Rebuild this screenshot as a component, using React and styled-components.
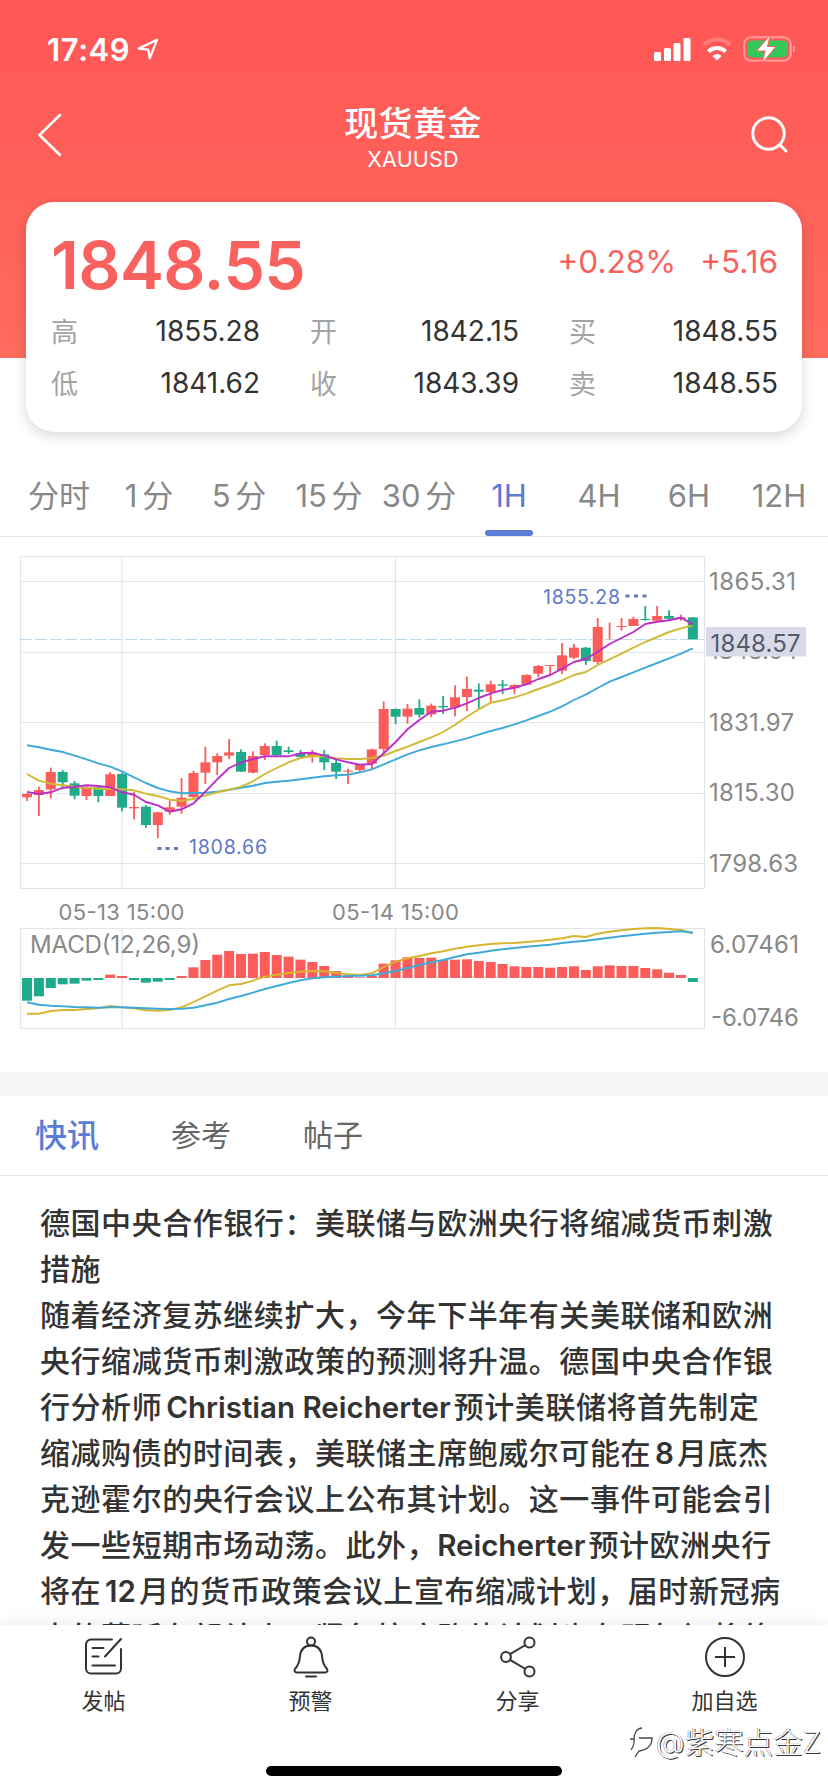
import React, { useState } from "react";
import styled, { createGlobalStyle } from "styled-components";

const quotes = [
  { label: "高", value: "1855.28" },
  { label: "开", value: "1842.15" },
  { label: "买", value: "1848.55" },
  { label: "低", value: "1841.62" },
  { label: "收", value: "1843.39" },
  { label: "卖", value: "1848.55" },
];

const periods = ["分时", "1 分", "5 分", "15 分", "30 分", "1H", "4H", "6H", "12H"];

// [wick top, body top, body bottom, wick bottom, rising]
const candles = [
  [760, 762, 772, 783, 1], [740, 750, 765, 828, 1], [683, 696, 748, 776, 1],
  [690, 696, 727, 748, 0], [723, 730, 767, 778, 0], [735, 742, 768, 780, 1],
  [735, 742, 768, 787, 0], [696, 703, 768, 768, 1], [698, 702, 803, 814, 0],
  [755, 801, 805, 838, 1], [795, 800, 855, 864, 0], [815, 817, 855, 895, 1],
  [782, 802, 815, 824, 1], [714, 773, 800, 821, 1], [692, 699, 771, 775, 1],
  [620, 667, 698, 732, 1], [640, 648, 667, 705, 1], [597, 637, 647, 657, 1],
  [628, 636, 695, 696, 0], [634, 648, 698, 700, 1], [610, 618, 645, 660, 1],
  [602, 618, 645, 648, 0], [620, 631, 636, 642, 0], [630, 640, 651, 655, 0],
  [630, 638, 651, 668, 1], [630, 643, 667, 690, 0], [660, 669, 695, 717, 0],
  [686, 692, 695, 732, 1], [672, 674, 690, 698, 1], [626, 628, 671, 688, 1],
  [484, 507, 627, 650, 1], [505, 507, 530, 553, 0], [492, 506, 530, 551, 1],
  [478, 504, 524, 533, 0], [491, 497, 523, 532, 1], [468, 498, 502, 522, 0],
  [436, 472, 503, 529, 1], [410, 447, 471, 513, 1], [430, 449, 455, 508, 0],
  [422, 433, 456, 488, 1], [420, 433, 437, 462, 0], [433, 435, 445, 462, 1],
  [403, 405, 434, 434, 1], [375, 378, 401, 411, 1], [375, 375, 378, 405, 1],
  [309, 346, 392, 402, 1], [312, 323, 353, 357, 1], [321, 323, 363, 375, 0],
  [234, 261, 366, 372, 1], [248, 274, 274, 298, 1], [234, 258, 261, 272, 1],
  [230, 237, 258, 258, 1], [198, 237, 240, 242, 0], [198, 228, 242, 244, 1],
  [211, 228, 236, 242, 0], [224, 232, 236, 242, 1], [232, 232, 298, 298, 0],
];

const ma5 = [
  756, 762, 757, 743, 741, 736, 738, 742, 757, 764, 786, 796, 815, 808, 790,
  755, 718, 684, 668, 657, 649, 649, 649, 640, 638, 647, 658, 667, 674, 672,
  640, 606, 568, 540, 515, 512, 503, 490, 474, 460, 450, 443, 433, 417, 405,
  386, 366, 357, 335, 312, 294, 276, 252, 245, 241, 233, 253,
];
const ma10 = [
  702, 722, 731, 736, 740, 744, 746, 747, 748, 751, 761, 768, 779, 782, 777,
  767, 757, 749, 740, 724, 702, 684, 667, 654, 648, 649, 655, 657, 657, 654,
  647, 633, 620, 606, 592, 576, 554, 530, 508, 488, 481, 472, 461, 447, 435,
  421, 405, 396, 375, 358, 341, 323, 306, 291, 276, 265, 256,
];
const ma20 = [
  616, 622, 629, 636, 647, 658, 670, 680, 694, 712, 729, 744, 754, 760, 759,
  758, 755, 749, 743, 737, 729, 725, 722, 718, 713, 709, 706, 704, 697, 688,
  673, 658, 643, 631, 621, 613, 604, 595, 584, 573, 564, 553, 541, 528, 515,
  499, 480, 464, 444, 425, 411, 397, 383, 369, 355, 341, 325,
];
const macd = [
  332, 319, 294, 283, 281, 272, 270, 254, 258, 270, 278, 275, 270, 258, 232,
  210, 194, 183, 192, 191, 186, 195, 200, 209, 216, 228, 243, 257, 262, 258,
  221, 211, 202, 204, 203, 210, 209, 208, 213, 216, 222, 229, 231, 231, 233,
  231, 229, 240, 229, 226, 228, 228, 234, 238, 248, 255, 276,
];
const dif = [
  371, 371, 363, 360, 360, 357, 355, 348, 352, 355, 361, 362, 360, 352, 336,
  319, 302, 286, 282, 272, 260, 254, 249, 245, 243, 244, 248, 253, 255, 250,
  231, 215, 205, 198, 190, 184, 176, 170, 166, 162, 160, 159, 156, 153, 149,
  145, 138, 141, 131, 125, 121, 117, 115, 114, 117, 120, 129,
];
const dea = [
  337, 344, 347, 349, 351, 352, 353, 352, 352, 353, 355, 356, 357, 356, 353,
  346, 338, 327, 318, 308, 297, 288, 279, 271, 265, 262, 260, 258, 257, 256,
  250, 243, 234, 225, 217, 210, 201, 193, 188, 182, 178, 174, 170, 167, 164,
  159, 155, 152, 148, 143, 139, 135, 131, 128, 126, 124, 128,
];

const px = (i) => 27 + i * 11.89;
const priceY = (v) => 3 + v / 3;
const macdY = (v) => 353 + v / 3;
const toPoints = (list, y) =>
  list.map((v, i) => `${px(i).toFixed(1)},${y(v).toFixed(1)}`).join(" ");

const RED = "#fc5c5a";
const GREEN = "#1fab89";

function StatusBar() {
  return (
    <StyledStatus>
      <Clock>17:49</Clock>
      <svg width="22" height="22" viewBox="0 0 22 22">
        <path
          d="M1.8 10.6L20 1.8l-7.2 18.4-1.6-8.6z"
          fill="none"
          stroke="#fff"
          strokeWidth="2.3"
          strokeLinejoin="round"
        />
      </svg>
      <Spacer />
      <svg width="144" height="30" viewBox="0 0 144 30">
        <g fill="#fff">
          <rect x="2" y="18" width="7" height="9" rx="1.5" />
          <rect x="12" y="14" width="7" height="13" rx="1.5" />
          <rect x="21.5" y="9" width="7" height="18" rx="1.5" />
          <rect x="31.5" y="4" width="7" height="23" rx="1.5" />
          <path d="M65 26.5l-4.6-4.6a6.5 6.5 0 0 1 9.2 0z" />
        </g>
        <g fill="none" stroke="#fff" strokeWidth="4">
          <path d="M56.4 17.6a12.2 12.2 0 0 1 17.2 0" />
          <path d="M52 10.8a18.6 18.6 0 0 1 26 0" opacity="0.22" />
        </g>
        <rect x="92.2" y="3.2" width="46.5" height="23.6" rx="7" fill="none" stroke="#fff" strokeOpacity="0.4" strokeWidth="2" />
        <rect x="95.5" y="6.5" width="40" height="17" rx="4.2" fill="#34c759" />
        <path d="M141 11.5c2.4.6 2.4 6.4 0 7z" fill="#fff" opacity="0.5" />
        <path d="M118.5.5l-14 16.5h8.5l-3 12.500 14-17h-8.500z" fill="#fff" stroke="#fc5a58" strokeWidth="1" />
      </svg>
    </StyledStatus>
  );
}

function PriceChart() {
  return (
    <svg width="828" height="535" viewBox="0 0 828 535">
      {/* grid */}
      <g fill="none" stroke="#e4e5e8" strokeWidth="1.2">
        <rect x="20.5" y="19.5" width="684" height="332" />
        <rect x="20.5" y="391.5" width="684" height="100" />
        {[44.5, 115.5, 185.5, 256.5, 326.5].map((y) => (
          <line key={y} x1="20.5" x2="704.5" y1={y} y2={y} />
        ))}
        {[122, 395.5].map((x) => (
          <path key={x} d={`M${x} 19.5V351.5M${x} 391.5V491.5`} />
        ))}
      </g>
      <line x1="20" x2="704" y1="102.5" y2="102.5" stroke="#bfd9ea" strokeDasharray="12 3" />

      {candles.map(([high, top, bottom, low, up], i) => (
        <g key={i} fill={up ? RED : GREEN}>
          <rect x={px(i) - 0.9} y={priceY(high)} width="1.8" height={(low - high) / 3} />
          <rect x={px(i) - 5} y={priceY(top)} width="10" height={(bottom - top) / 3} />
        </g>
      ))}
      <g fill="none" strokeWidth="1.9" strokeLinejoin="round">
        <polyline points={toPoints(ma20, priceY)} stroke="#3fa9d9" />
        <polyline points={toPoints(ma10, priceY)} stroke="#cfb935" />
        <polyline points={toPoints(ma5, priceY)} stroke="#bb2fc9" />
      </g>

      {macd.map((v, i) => (
        <rect
          key={i}
          x={px(i) - 5}
          y={macdY(Math.min(v, 264))}
          width="10"
          height={Math.abs(v - 264) / 3}
          fill={v > 264 ? GREEN : RED}
        />
      ))}
      <g fill="none" strokeWidth="1.9" strokeLinejoin="round">
        <polyline points={toPoints(dif, macdY)} stroke="#d6b52f" />
        <polyline points={toPoints(dea, macdY)} stroke="#3fa9d9" />
      </g>

      <ChartText size={19.5} tone="#5b78cc" x="189" y="317" textLength="78">1808.66</ChartText>
      <ChartText size={19.5} tone="#5b78cc" x="543" y="67" textLength="77">1855.28</ChartText>
      <g fill="#6478b8">
        {[157.5, 165.5, 174, 625.5, 634, 642.5].map((x, i) => (
          <rect key={x} x={x} y={i < 3 ? 310 : 57.5} width="4" height="3" />
        ))}
      </g>

      <ChartText x="709" y="52.5" textLength="87">1865.31</ChartText>
      <ChartText x="709" y="121.5" textLength="89">1848.64</ChartText>
      <ChartText x="709" y="193.5" textLength="85">1831.97</ChartText>
      <ChartText x="709" y="264" textLength="86">1815.30</ChartText>
      <ChartText x="709" y="335" textLength="89">1798.63</ChartText>
      <rect x="706" y="90" width="100" height="29.5" fill="#d9dbe8" />
      <ChartText tone="#555b6b" x="710.5" y="114.5" textLength="90">1848.57</ChartText>

      <ChartText size={22} x="58.5" y="382.5" textLength="126">05-13 15:00</ChartText>
      <ChartText size={22} x="332" y="382.5" textLength="127">05-14 15:00</ChartText>
      <ChartText x="30" y="415.5" textLength="170">MACD(12,26,9)</ChartText>
      <ChartText x="710" y="415.5" textLength="89">6.07461</ChartText>
      <ChartText x="711" y="489" textLength="88">-6.0746</ChartText>
    </svg>
  );
}

function App() {
  const [period, setPeriod] = useState("1H");

  return (
    <Page>
      <GlobalStyle />
      <Hero>
        <StatusBar />
        <NavBar>
          <svg width="40" height="46" viewBox="0 0 40 46">
            <path d="M24 3L3.5 23 24 43" fill="none" stroke="#fff" strokeWidth="2.6" strokeLinecap="round" strokeLinejoin="round" />
          </svg>
          <Titles>
            <h1>现货黄金</h1>
            <p>XAUUSD</p>
          </Titles>
          <svg width="40" height="40" viewBox="0 0 40 40">
            <g fill="none" stroke="#fff" strokeWidth="2.9" strokeLinecap="round">
              <circle cx="18.5" cy="18.500" r="15.7" />
              <path d="M30 30l6 6" />
            </g>
          </svg>
        </NavBar>
        <QuoteCard>
          <PriceLine>
            <Price>1848.55</Price>
            <Change>+0.28%</Change>
            <Change>+5.16</Change>
          </PriceLine>
          <QuoteGrid>
            {quotes.map((q) => (
              <Quote key={q.label}>
                <span>{q.label}</span>
                <b>{q.value}</b>
              </Quote>
            ))}
          </QuoteGrid>
        </QuoteCard>
      </Hero>

      <PeriodTabs>
        {periods.map((p) => (
          <PeriodTab key={p} $active={p === period} onClick={() => setPeriod(p)}>
            {p}
          </PeriodTab>
        ))}
      </PeriodTabs>

      <PriceChart />

      <Divider />
      <NewsTabs>
        <NewsTab $active>快讯</NewsTab>
        <NewsTab>参考</NewsTab>
        <NewsTab>帖子</NewsTab>
      </NewsTabs>

      <Article>
        <p>德国中央合作银行：美联储与欧洲央行将缩减货币刺激</p>
        <p>措施</p>
        <p>随着经济复苏继续扩大，今年下半年有关美联储和欧洲</p>
        <p>央行缩减货币刺激政策的预测将升温。德国中央合作银</p>
        <p>
          行分析师<Latin>Christian Reicherter</Latin>预计美联储将首先制定
        </p>
        <p>
          缩减购债的时间表，美联储主席鲍威尔可能在<Latin>8</Latin>月底杰
        </p>
        <p>克逊霍尔的央行会议上公布其计划。这一事件可能会引</p>
        <p>
          发一些短期市场动荡。此外，<Latin $start>Reicherter</Latin>预计欧洲央行
        </p>
        <p>
          将在<Latin>12</Latin>月的货币政策会议上宣布缩减计划，届时新冠病
        </p>
        <p>毒的蔓延有望结束，紧急抗疫购债计划也在明年初将终</p>
      </Article>

      <BottomBar>
        <Actions>
          <Action>
            <svg width="42" height="42" viewBox="0 0 42 42">
              <g fill="none" stroke="#333" strokeWidth="2" strokeLinecap="round">
                <path d="M29 3.5H8a5 5 0 0 0-5 5v24a5 5 0 0 0 5 5h25a5 5 0 0 0 5-5V13" />
                <path d="M38 3L22 20.5M9.5 12h11M9.5 20.5h6M9.5 29.5h22.5" />
              </g>
            </svg>
            <span>发帖</span>
          </Action>
          <Action>
            <svg width="42" height="42" viewBox="0 0 42 42">
              <g fill="none" stroke="#333" strokeWidth="2" strokeLinecap="round" strokeLinejoin="round">
                <circle cx="21" cy="5.5" r="4" />
                <path d="M21 9.5c-8 0-10.800 6-11.200 12-.4 6-2.300 8.500-4.800 11.500-1 1.500-.5 3.500 2 3.500h28c2.500 0 3-2 2-3.500-2.500-3-4.400-5.500-4.800-11.500C31.800 15.500 29 9.500 21 9.500z" />
                <path d="M16 40.5h10" />
              </g>
            </svg>
            <span>预警</span>
          </Action>
          <Action>
            <svg width="42" height="42" viewBox="0 0 42 42">
              <g fill="none" stroke="#333" strokeWidth="2">
                <circle cx="9" cy="21" r="4.9" />
                <circle cx="32.5" cy="6.5" r="5" />
                <circle cx="32.5" cy="35.5" r="5" />
                <path d="M13 18.2L28.5 9M13 23.8L28.5 33" />
              </g>
            </svg>
            <span>分享</span>
          </Action>
          <Action>
            <svg width="42" height="42" viewBox="0 0 42 42">
              <g fill="none" stroke="#333" strokeWidth="2">
                <circle cx="21" cy="21" r="19" />
                <path d="M11 21h20M21 11v20" />
              </g>
            </svg>
            <span>加自选</span>
          </Action>
        </Actions>
        <HomeIndicator />
        <Watermark>
          <svg width="28" height="36" viewBox="0 0 28 36">
            <g fill="none" stroke="#444" strokeWidth="1.3">
              <path d="M2 15h4c0-6 3-11 8-11M6 15c1 5-1 8-3 11" />
              <path d="M11 14h13c0 8-6 12-13 13l-4 6" />
            </g>
          </svg>
          @紫寒点金Z
        </Watermark>
      </BottomBar>
    </Page>
  );
}

export default App;

const GlobalStyle = createGlobalStyle`
  * {
    box-sizing: border-box;
  }
  body {
    margin: 0;
    background: #fff;
    font-family: Inter, "Noto Sans CJK SC", sans-serif;
  }
  h1, p {
    margin: 0;
  }
  svg {
    display: block;
    flex-shrink: 0;
  }
`;

const Page = styled.div`
  display: flex;
  flex-direction: column;
  width: 828px;
  height: 1792px;
  overflow: hidden;
`;

const Hero = styled.header`
  background: linear-gradient(#ff5656, #ff6c5c) no-repeat;
  background-size: 100% 358px;
  padding: 0 26px;
`;

const StyledStatus = styled.div`
  display: flex;
  align-items: center;
  height: 98px;
  padding: 0 6px 0 21px;
`;

const Clock = styled.span`
  width: 90px;
  color: #fff;
  font-size: 31px;
  font-weight: 600;
  letter-spacing: 0.6px;
`;

const Spacer = styled.div`
  flex: 1;
`;

const NavBar = styled.nav`
  display: flex;
  align-items: center;
  justify-content: space-between;
  height: 104px;
  padding: 2px 12px 32px 10px;
  color: #fff;
`;

const Titles = styled.div`
  padding-top: 4px;
  text-align: center;

  h1 {
    font-size: 34px;
    line-height: 44px;
    font-weight: 500;
    letter-spacing: 0.4px;
  }
  p {
    font-size: 21.5px;
    line-height: 26px;
    letter-spacing: 0.2px;
  }
`;

const QuoteCard = styled.section`
  height: 230px;
  padding: 27px 24px 0 25px;
  background: #fff;
  border-radius: 28px;
  box-shadow: 0 4px 14px rgba(0, 0, 0, 0.16);
`;

const PriceLine = styled.div`
  display: flex;
  align-items: center;
  height: 72px;
  color: #f9615e;
`;

const Price = styled.strong`
  flex: 1;
  font-size: 66px;
  font-weight: 600;
  letter-spacing: -0.6px;
`;

const Change = styled.span`
  margin-left: 24px;
  padding-bottom: 8px;
  font-size: 31.5px;
`;

const QuoteGrid = styled.div`
  display: grid;
  grid-template-columns: repeat(3, 209px);
  grid-auto-rows: 52px;
  column-gap: 50px;
  margin-top: 3px;
`;

const Quote = styled.div`
  display: flex;
  align-items: center;
  justify-content: space-between;
  font-size: 28px;

  span {
    color: #a3a3a3;
    font-size: 27px;
  }
  b {
    padding-top: 2px;
    color: #333;
    font-weight: 400;
  }
`;

const PeriodTabs = styled.div`
  display: flex;
  height: 105px;
  padding: 22px 0 0 14px;
  border-bottom: 1px solid #e6e6e6;
`;

const PeriodTab = styled.div`
  display: flex;
  flex-direction: column;
  align-items: center;
  justify-content: space-between;
  flex: 0 0 90px;
  padding-top: 19px;
  color: ${(props) => (props.$active ? "#5b7bd5" : "#888")};
  font-size: 31px;
  line-height: 46px;
  white-space: nowrap;
  word-spacing: -4px;

  &::after {
    content: "";
    width: 48px;
    height: 6px;
    border-radius: 3px;
    background: ${(props) => (props.$active ? "#5b7bd5" : "transparent")};
  }
`;

const ChartText = styled.text`
  fill: ${(props) => props.tone || "#888"};
  font-size: ${(props) => props.size || 24}px;
`;

const Divider = styled.div`
  height: 24px;
  flex-shrink: 0;
  background: #f6f6f6;
`;

const NewsTabs = styled.div`
  display: flex;
  align-items: center;
  gap: 72px;
  height: 80px;
  flex-shrink: 0;
  padding: 0 35px 5px;
  border-bottom: 1px solid #e6e6e6;
`;

const NewsTab = styled.span`
  color: ${(props) => (props.$active ? "#5b7bd5" : "#666")};
  font-size: ${(props) => (props.$active ? 32 : 30)}px;
  font-weight: ${(props) => (props.$active ? 500 : 400)};
`;

const Article = styled.article`
  flex: 1;
  min-height: 0;
  overflow: hidden;
  padding: 24px 40px 0;
  color: #333;
  font-size: 30px;
  font-weight: 500;
  letter-spacing: 0.55px;
  line-height: 46px;
  white-space: nowrap;

  p {
    height: 46px;
  }
`;

const Latin = styled.span`
  margin: 0 3px 0 ${(props) => (props.$start ? 0 : 4)}px;
  font-size: 29.5px;
  font-weight: 600;
  line-height: 1;
  letter-spacing: 0;
`;

const BottomBar = styled.footer`
  position: relative;
  display: flex;
  flex-direction: column;
  align-items: center;
  height: 167px;
  flex-shrink: 0;
  background: #fff;
  box-shadow: 0 -2px 14px rgba(0, 0, 0, 0.08);
`;

const Actions = styled.div`
  display: flex;
  width: 100%;
`;

const Action = styled.div`
  display: flex;
  flex: 1;
  flex-direction: column;
  align-items: center;
  padding-top: 11px;
  color: #333;
  font-size: 22px;
  line-height: 46px;
`;

const HomeIndicator = styled.div`
  width: 296px;
  height: 10px;
  margin-top: 42px;
  border-radius: 5px;
  background: #000;
`;

// sits over the bar's bottom right corner
const Watermark = styled.div`
  position: absolute;
  right: 7px;
  bottom: 30px;
  display: flex;
  align-items: center;
  color: #fff;
  font-size: 29.5px;
  line-height: 40px;
  font-weight: 300;
  text-shadow: 1px 1px 0.5px #333, -0.5px -0.5px 0.5px #777;
`;
